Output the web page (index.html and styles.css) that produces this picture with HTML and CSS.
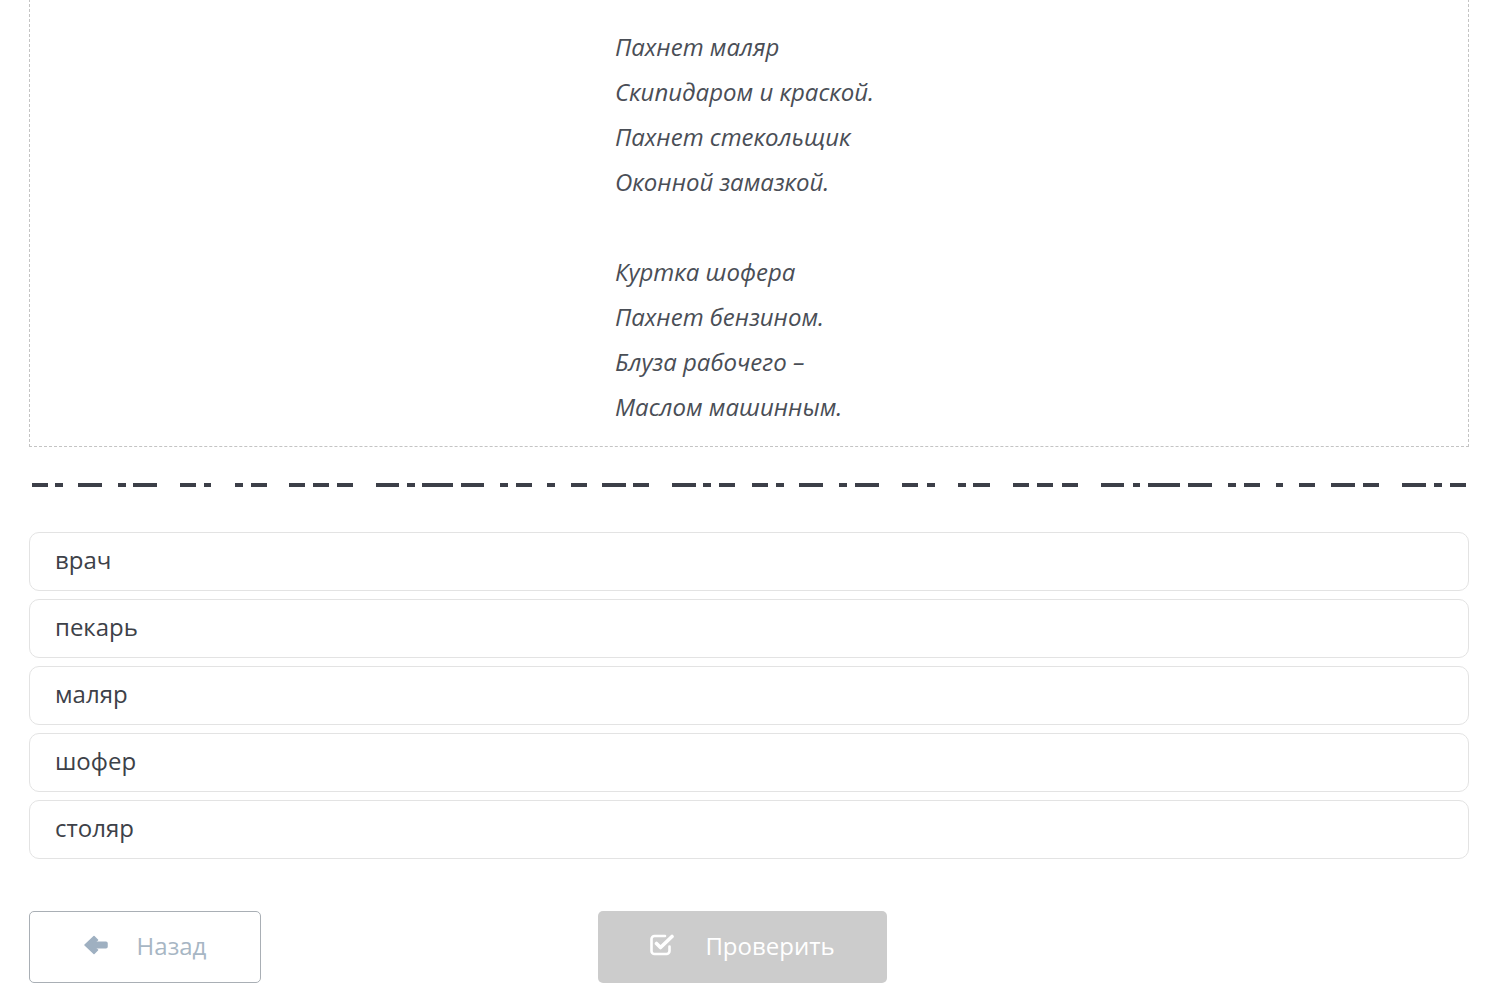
FILE: index.html
```html
<!DOCTYPE html>
<html lang="ru">
<head>
<meta charset="utf-8">
<title>Задание</title>
<link rel="stylesheet" href="styles.css">
</head>
<body>
<div class="page">
  <div class="text-box">
    <div class="poem">
      <p class="stanza">Пахнет маляр<br>Скипидаром и краской.<br>Пахнет стекольщик<br>Оконной замазкой.</p>
      <p class="stanza">Куртка шофера<br>Пахнет бензином.<br>Блуза рабочего –<br>Маслом машинным.</p>
    </div>
  </div>

  <div class="blanks">
    <svg class="blanks-svg" width="1440" height="86" viewBox="0 0 1440 86" aria-hidden="true">
      <g transform="translate(-29,36)" fill="#3c3f48">
        <rect x="32" y="0" width="16" height="4"/>
        <rect x="55" y="0" width="8" height="4"/>
        <rect x="78" y="0" width="24" height="4"/>
        <rect x="118" y="0" width="8" height="4"/>
        <rect x="133" y="0" width="24" height="4"/>
        <rect x="180" y="0" width="16" height="4"/>
        <rect x="204" y="0" width="7" height="4"/>
        <rect x="235" y="0" width="8" height="4"/>
        <rect x="251" y="0" width="16" height="4"/>
        <rect x="289" y="0" width="16" height="4"/>
        <rect x="313" y="0" width="16" height="4"/>
        <rect x="337" y="0" width="16" height="4"/>
        <rect x="376" y="0" width="23" height="4"/>
        <rect x="407" y="0" width="8" height="4"/>
        <rect x="422" y="0" width="31" height="4"/>
        <rect x="461" y="0" width="23" height="4"/>
        <rect x="500" y="0" width="8" height="4"/>
        <rect x="516" y="0" width="16" height="4"/>
        <rect x="547" y="0" width="8" height="4"/>
        <rect x="571" y="0" width="16" height="4"/>
        <rect x="602" y="0" width="24" height="4"/>
        <rect x="633" y="0" width="16" height="4"/>
        <rect x="672" y="0" width="24" height="4"/>
        <rect x="703" y="0" width="8" height="4"/>
        <rect x="719" y="0" width="16" height="4"/>
        <rect x="752" y="0" width="16" height="4"/>
        <rect x="776" y="0" width="8" height="4"/>
        <rect x="799" y="0" width="24" height="4"/>
        <rect x="839" y="0" width="8" height="4"/>
        <rect x="855" y="0" width="24" height="4"/>
        <rect x="902" y="0" width="16" height="4"/>
        <rect x="927" y="0" width="8" height="4"/>
        <rect x="958" y="0" width="8" height="4"/>
        <rect x="973" y="0" width="17" height="4"/>
        <rect x="1013" y="0" width="16" height="4"/>
        <rect x="1037" y="0" width="16" height="4"/>
        <rect x="1062" y="0" width="16" height="4"/>
        <rect x="1101" y="0" width="23" height="4"/>
        <rect x="1133" y="0" width="7" height="4"/>
        <rect x="1148" y="0" width="32" height="4"/>
        <rect x="1188" y="0" width="24" height="4"/>
        <rect x="1228" y="0" width="8" height="4"/>
        <rect x="1244" y="0" width="16" height="4"/>
        <rect x="1276" y="0" width="7" height="4"/>
        <rect x="1299" y="0" width="16" height="4"/>
        <rect x="1331" y="0" width="24" height="4"/>
        <rect x="1363" y="0" width="16" height="4"/>
        <rect x="1402" y="0" width="24" height="4"/>
        <rect x="1434" y="0" width="8" height="4"/>
        <rect x="1450" y="0" width="16" height="4"/>
      </g>
    </svg>
  </div>

  <ul class="options">
    <li class="option">врач</li>
    <li class="option">пекарь</li>
    <li class="option">маляр</li>
    <li class="option">шофер</li>
    <li class="option">столяр</li>
  </ul>

  <div class="actions">
    <button class="btn btn-back" type="button">
      <svg class="icon-arrow" width="24" height="20" viewBox="0 0 24 20" aria-hidden="true">
        <path d="M1 10 L10 1.5 L13.5 5 L9.5 7.2 H22 Q23 7.2 23 8.2 V11.8 Q23 12.8 22 12.8 H9.5 L13.5 15 L10 18.5 Z" fill="#9fb0c1" stroke="#9fb0c1" stroke-width="1.5" stroke-linejoin="round"/>
      </svg>
      <span>Назад</span>
    </button>
    <button class="btn btn-check" type="button">
      <svg class="icon-check" width="26" height="22" viewBox="0 0 26 22" aria-hidden="true">
        <path d="M19.5 12.5 V17 A3 3 0 0 1 16.5 20 H4.5 A3 3 0 0 1 1.5 17 V5 A3 3 0 0 1 4.5 2 H15" fill="none" stroke="#fff" stroke-width="2.6" stroke-linecap="round"/>
        <path d="M6.5 9.5 L10.5 13.5 L22 2.5" fill="none" stroke="#fff" stroke-width="3.6" stroke-linecap="round" stroke-linejoin="round"/>
      </svg>
      <span>Проверить</span>
    </button>
  </div>
</div>
</body>
</html>
```

FILE: styles.css
```css
html, body {
  margin: 0;
  padding: 0;
  background: #ffffff;
}

body {
  font-family: "Open Sans", "Noto Sans", sans-serif;
  color: #3d4148;
}

.page {
  padding: 0 28px 0 29px;
  overflow: hidden;
}

.text-box {
  margin-top: -1px;
  border: 1px dashed #c4c4c4;
  padding: 24px 0 17px 585px;
  display: flex;
  justify-content: flex-start;
}

.poem {
  font-style: italic;
  font-size: 24px;
  line-height: 45px;
  color: #4a4e56;
}

.stanza {
  margin: 0;
}

.stanza + .stanza {
  margin-top: 45px;
}

.blanks {
  height: 85px;
}

.blanks-svg {
  display: block;
}

.options {
  list-style: none;
  margin: 0;
  padding: 0;
  display: flex;
  flex-direction: column;
  gap: 8px;
}

.option {
  height: 53px;
  border: 1px solid #e3e3e3;
  border-radius: 10px;
  padding: 0 25px 4px;
  display: flex;
  align-items: center;
  font-size: 24px;
  color: #3d4148;
}

.actions {
  display: flex;
  align-items: center;
  gap: 337px;
  margin-top: 52px;
}

.btn {
  height: 72px;
  border-radius: 5px;
  font-family: "Open Sans", "Noto Sans", sans-serif;
  font-size: 24px;
  display: flex;
  align-items: center;
  justify-content: center;
  gap: 29px;
  padding: 0 0 4px;
  cursor: default;
}

.btn-back {
  width: 232px;
  background: #ffffff;
  border: 1px solid #a9afb5;
  color: #a7b6c4;
}

.btn-check {
  width: 289px;
  background: #cccccc;
  border: none;
  color: #ffffff;
}

.icon-arrow,
.icon-check {
  display: block;
  flex: none;
}
```
